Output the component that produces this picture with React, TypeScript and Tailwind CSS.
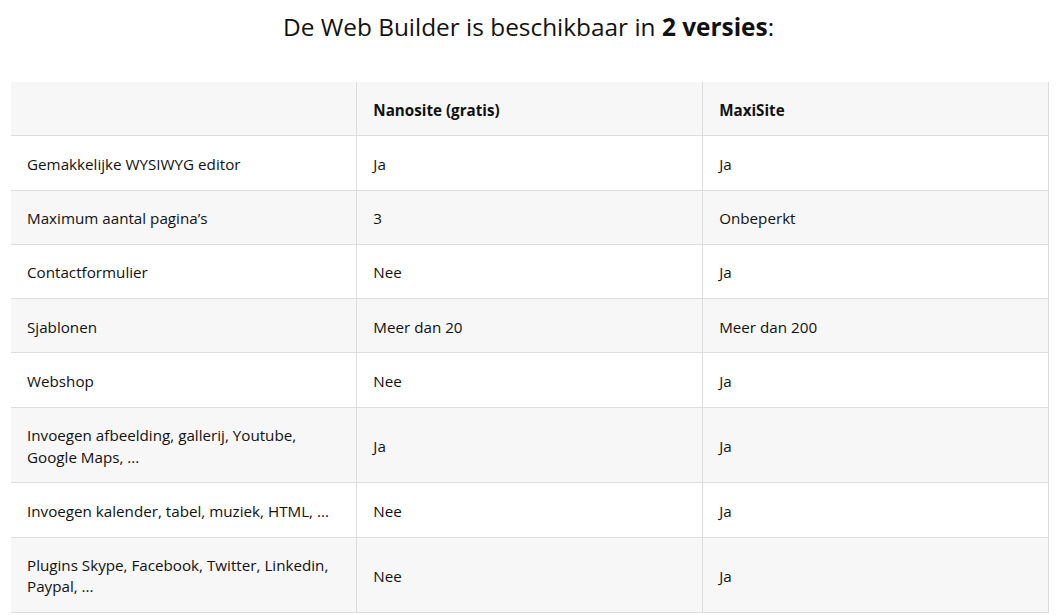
import React from "react";

const rows: [string, string, string][] = [
  ["Gemakkelijke WYSIWYG editor", "Ja", "Ja"],
  ["Maximum aantal pagina’s", "3", "Onbeperkt"],
  ["Contactformulier", "Nee", "Ja"],
  ["Sjablonen", "Meer dan 20", "Meer dan 200"],
  ["Webshop", "Nee", "Ja"],
  ["Invoegen afbeelding, gallerij, Youtube, Google Maps, ...", "Ja", "Ja"],
  ["Invoegen kalender, tabel, muziek, HTML, ...", "Nee", "Ja"],
  ["Plugins Skype, Facebook, Twitter, Linkedin, Paypal, ...", "Nee", "Ja"],
];

export default function App() {
  return (
    <div className="w-[1057px] h-[615px] bg-white overflow-hidden text-[#111]" style={{ fontFamily: '"Open Sans", "Noto Sans", sans-serif' }}>
      <h1 className="text-center text-[24.4px] leading-[32px] pt-[11px] font-normal">
        De Web Builder is beschikbaar in <strong className="font-bold">2 versies</strong>:
      </h1>
      <table className="ml-[11px] mt-[39px] w-[1038px] table-fixed border-collapse text-[15.2px] leading-[21.3px]">
        <thead>
          <tr className="bg-[#f7f7f7]">
            <th className="border-r border-b border-[#dddddd] px-[16px] pt-[17.5px] pb-[14.5px] text-left font-bold"></th>
            <th className="border-r border-b border-[#dddddd] px-[16px] pt-[17.5px] pb-[14.5px] text-left font-bold">Nanosite (gratis)</th>
            <th className="border-r border-b border-[#dddddd] px-[16px] pt-[17.5px] pb-[14.5px] text-left font-bold">MaxiSite</th>
          </tr>
        </thead>
        <tbody>
          {rows.map((r, i) => (
            <tr key={i} className={i % 2 === 1 ? "bg-[#f7f7f7]" : "bg-white"}>
              {r.map((c, j) => (
                <td key={j} className="border-r border-b border-[#dddddd] px-[16px] pt-[17.5px] pb-[14.5px] align-middle">
                  {j === 0 && c.includes(", Google") ? (
                    <>Invoegen afbeelding, gallerij, Youtube,<br />Google Maps, ...</>
                  ) : j === 0 && c.startsWith("Plugins") ? (
                    <>Plugins Skype, Facebook, Twitter, Linkedin,<br />Paypal, ...</>
                  ) : (
                    c
                  )}
                </td>
              ))}
            </tr>
          ))}
        </tbody>
      </table>
    </div>
  );
}
